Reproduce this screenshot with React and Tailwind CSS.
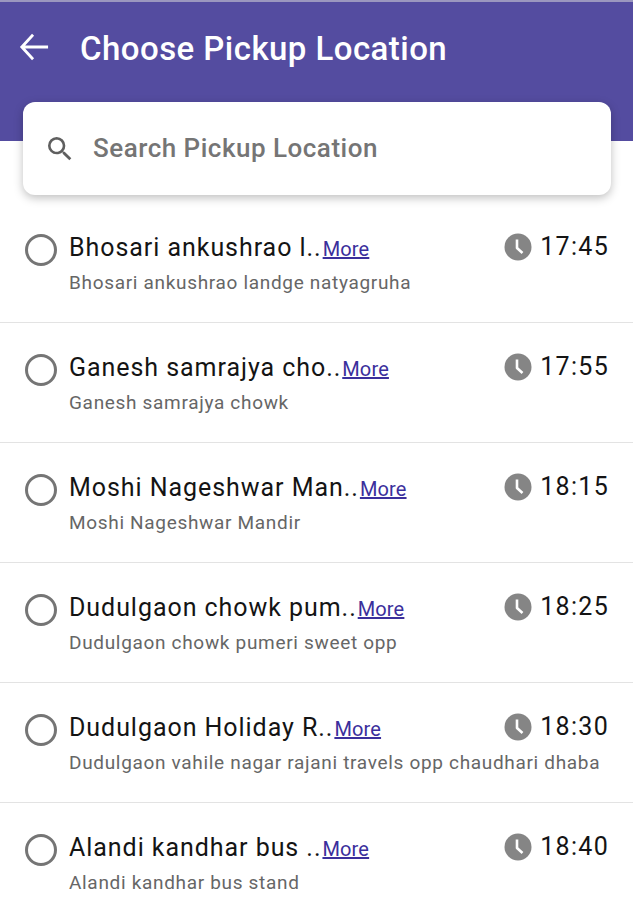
import React from "react";

const rows = [
  ["Bhosari ankushrao l..", "Bhosari ankushrao landge natyagruha", "17:45"],
  ["Ganesh samrajya cho..", "Ganesh samrajya chowk", "17:55"],
  ["Moshi Nageshwar Man..", "Moshi Nageshwar Mandir", "18:15"],
  ["Dudulgaon chowk pum..", "Dudulgaon chowk pumeri sweet opp", "18:25"],
  ["Dudulgaon Holiday R..", "Dudulgaon vahile nagar rajani travels opp chaudhari dhaba", "18:30"],
  ["Alandi kandhar bus ..", "Alandi kandhar bus stand", "18:40"],
];

function Clock() {
  return (
    <svg width="28" height="28" viewBox="0 0 28 28" className="shrink-0">
      <circle cx="14" cy="14" r="13.5" fill="#858585" />
      <path d="M13 6.5v8.5l5.5 5" fill="none" stroke="#fff" strokeWidth="2.6" strokeLinejoin="round" />
    </svg>
  );
}

function Row({ name, sub, time, last }) {
  return (
    <div className={`relative h-[120px] shrink-0 flex pl-[25px] pr-[25px] pt-[30px] ${last ? "" : "border-b border-[#e3e3e3]"}`}>
      <div className="w-[32px] h-[32px] mt-[1px] shrink-0 rounded-full border-[3px] border-[#757575]" />
      <div className="ml-[12px] flex-1 min-w-0">
        <div className="flex items-baseline h-[30px] leading-[29px] whitespace-nowrap">
          <span className="text-[25px] text-[#141414] tracking-[0.95px]">{name}</span>
          <span className="ml-[1px] text-[20px] text-[#3b2f9c] underline tracking-[0.15px]">More</span>
        </div>
        <div className="mt-[8px] text-[19px] leading-[24px] text-[#666666] tracking-[0.68px] whitespace-nowrap">{sub}</div>
      </div>
      <div className="absolute right-[24px] top-[30px] flex items-center gap-[8px] h-[28px]">
        <Clock />
        <span className="text-[25px] leading-[28px] text-[#141414] tracking-[1.3px]">{time}</span>
      </div>
    </div>
  );
}

export default function App() {
  return (
    <div className="relative w-[633px] h-[900px] overflow-hidden bg-white font-['Roboto',sans-serif]">
      <div className="h-[141px] bg-[#544ca0] border-t-[2px] border-[#9b97bf] flex items-start pl-[19px] pt-[28px]">
        <svg width="30" height="30" viewBox="0 0 32 32" fill="none" stroke="#fff" strokeWidth="3" className="mt-[2px]">
          <path d="M31 16H3M15 3L3 16l12 13" />
        </svg>
        <span className="ml-[31px] text-[33px] leading-[38px] font-medium text-white tracking-[0.45px]">Choose Pickup Location</span>
      </div>
      <div className="relative ml-[23px] w-[588px] mt-[-39px] h-[93px] rounded-[12px] bg-white shadow-[0_3px_10px_rgba(0,0,0,0.25)] flex items-center pl-[21px]">
        <svg width="32" height="32" viewBox="0 0 24 24" fill="#5f5f5f">
          <path d="M15.5 14h-.79l-.28-.27A6.47 6.47 0 0 0 16 9.5 6.5 6.5 0 1 0 9.5 16c1.61 0 3.09-.59 4.23-1.57l.27.28v.79l5 4.99L20.49 19l-4.99-5zm-6 0C7.01 14 5 11.99 5 9.5S7.01 5 9.5 5 14 7.01 14 9.5 11.99 14 9.5 14z" />
        </svg>
        <span className="ml-[17px] text-[26px] font-medium text-[#757575] tracking-[0.5px]">Search Pickup Location</span>
      </div>
      <div className="mt-[8px] flex flex-col">
        {rows.map((r, i) => (
          <Row key={i} name={r[0]} sub={r[1]} time={r[2]} last={i === rows.length - 1} />
        ))}
      </div>
    </div>
  );
}
